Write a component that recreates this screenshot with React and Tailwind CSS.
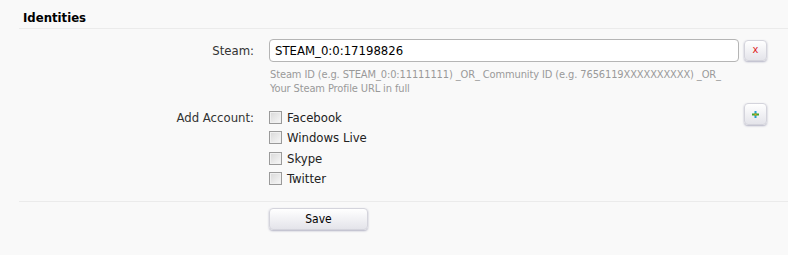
import React from "react";

const btn =
  "rounded-[4px] border border-[#d4d4dc] bg-gradient-to-b from-[#ffffff] to-[#e4e4ea] shadow-[0_1px_2px_rgba(90,90,130,0.45)] flex items-center justify-center";

function Check({ label }) {
  return (
    <label className="flex items-center h-[20.5px]">
      <span className="w-[13px] h-[13px] border border-[#9a9a9a] bg-gradient-to-br from-[#d8d8d8] to-[#f8f8f8] shadow-[inset_0_0_0_1px_#f0f0f0]" />
      <span className="ml-[5px] text-[13px] text-[#222]">{label}</span>
    </label>
  );
}

export default function App() {
  return (
    <div
      className="w-[788px] h-[255px] bg-[#f9f9f9] text-[#333] overflow-hidden"
      style={{ fontFamily: '"DejaVu Sans Condensed", "DejaVu Sans", sans-serif' }}
    >
      <div className="ml-[19px] pt-[10px]">
        <div className="pl-[4px] text-[13px] font-bold text-black leading-[16px] pb-[2px]">Identities</div>
        <div className="h-px bg-[#ebebeb]" />
        <div className="grid grid-cols-[235px_470px_23px] gap-x-[15px] mt-[10px]">
          <div className="text-right text-[13px] leading-[23px]">Steam:</div>
          <div>
            <div className="h-[23px] rounded-[4px] border border-[#b5b5b5] bg-white flex items-center pl-[5px] text-[13px] text-black">
              STEAM_0:0:17198826
            </div>
            <div className="mt-[6px] text-[11px] leading-[14px] text-[#999] pl-[1px] tracking-[-0.12px]">
              Steam ID (e.g. STEAM_0:0:11111111) _OR_ Community ID (e.g. 7656119XXXXXXXXXX) _OR_
              <br />
              Your Steam Profile URL in full
            </div>
          </div>
          <div className="-ml-[10px]">
            <div className={`${btn} w-[23px] h-[21px] mt-[1px] text-[11px] text-[#e0201c]`}>x</div>
          </div>

          <div className="text-right text-[13px] leading-[20px] mt-[12px]">Add Account:</div>
          <div className="mt-[11px]">
            <Check label="Facebook" />
            <Check label="Windows Live" />
            <Check label="Skype" />
            <Check label="Twitter" />
          </div>
          <div className="-ml-[10px] mt-[7px]">
            <div className={`${btn} w-[23px] h-[22px]`}>
              <svg width="7" height="7" viewBox="0 0 7 7">
                <rect x="2.5" y="0" width="2" height="7" fill="#1fa0d0" />
                <rect x="0" y="2.5" width="7" height="2" fill="#3aa832" />
                <rect x="2.5" y="2.5" width="2" height="2" fill="#e0a020" />
              </svg>
            </div>
          </div>
        </div>
        <div className="h-px bg-[#ebebeb] mt-[12px]" />
        <div className="ml-[250px] mt-[6px]">
          <div className={`${btn} w-[99px] h-[22px] text-[12px] text-black`}>Save</div>
        </div>
      </div>
    </div>
  );
}
